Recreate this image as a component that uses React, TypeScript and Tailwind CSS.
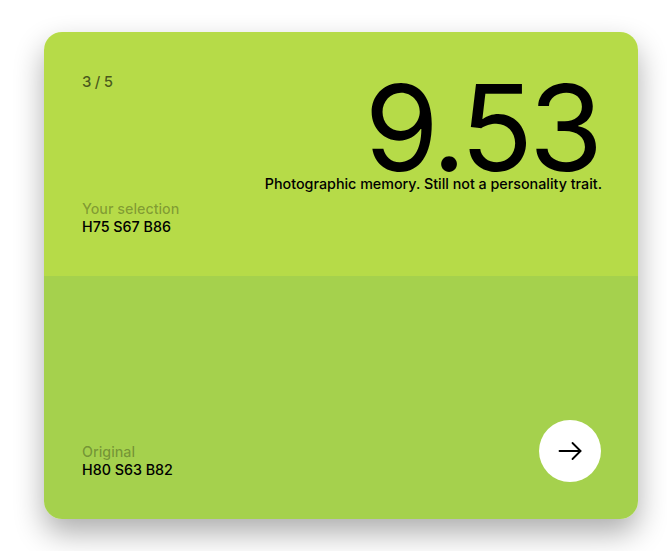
import React from 'react';

export default function App() {
  return (
    <div
      className="min-h-screen bg-white pl-[44px] pt-[32px]"
      style={{ fontFamily: 'Inter, "Noto Sans", sans-serif' }}
    >
      <div className="w-[594px] h-[487px] rounded-[18px] overflow-hidden flex flex-col shadow-[0_14px_30px_rgba(0,0,0,0.32)]">
        {/* selection */}
        <div className="h-[244px] bg-[#b6db48] flex justify-between px-[38px] pt-[38px] pb-[40px]">
          <div className="flex flex-col justify-between">
            <div className="text-[15px] leading-5 mt-[2px] text-black/60 font-medium tracking-[-0.02em]">3 / 5</div>
            <div className="text-[14.3px] leading-[18px]">
              <div className="text-black/30 font-medium">Your selection</div>
              <div className="text-black font-medium">H75 S67 B86</div>
            </div>
          </div>
          <div className="flex flex-col items-end">
            <div className="text-[120px] leading-[92px] mt-[12px] font-normal tracking-[-0.035em] text-black mr-[1px]">9.53</div>
            <div className="text-[14.3px] leading-5 font-medium text-black mr-[-2px]">
              Photographic memory. Still not a personality trait.
            </div>
          </div>
        </div>
        {/* original */}
        <div className="flex-1 bg-[#a5d14d] flex justify-between items-end px-[38px] pb-[37px]">
          <div className="text-[14.3px] leading-[18px] mb-[3px]">
            <div className="text-black/30 font-medium">Original</div>
            <div className="text-black font-medium">H80 S63 B82</div>
          </div>
          <button className="w-[62px] h-[62px] rounded-full bg-white flex items-center justify-center mr-[-1px]">
            <svg width="24" height="24" viewBox="0 0 24 24" fill="none" stroke="black" strokeWidth="1.8" strokeLinecap="round" strokeLinejoin="round">
              <path d="M1.5 12h21" />
              <path d="M14.5 4l8 8-8 8" />
            </svg>
          </button>
        </div>
      </div>
    </div>
  );
}
